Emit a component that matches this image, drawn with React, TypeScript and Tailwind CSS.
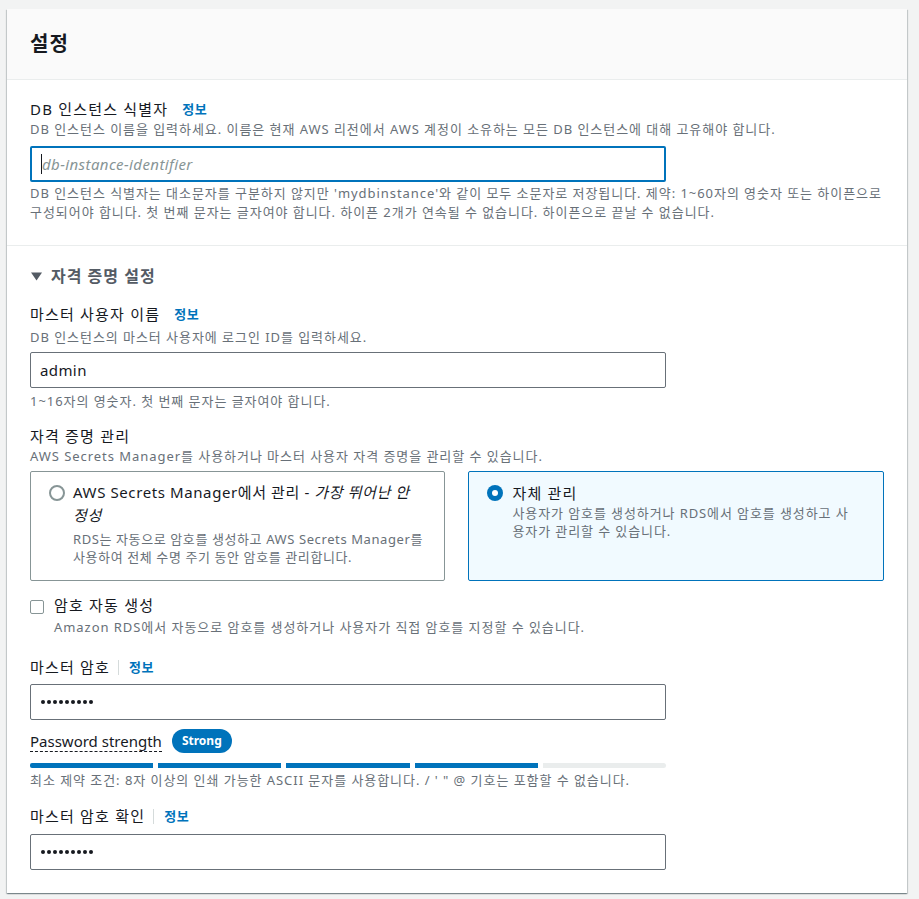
const Info = () => (
  <span className="text-[13px] font-bold tracking-[0.5px] text-[#0073bb]">정보</span>
);

const Label = ({ text, bar = false }: { text: string; bar?: boolean }) => (
  <div className="flex h-[22px] items-center text-[15px] leading-[22px] tracking-[1.2px] text-[#16191f]">
    <span>{text}</span>
    {bar ? (
      <span className="ml-[8px] mr-[10px] h-[15px] w-px bg-[#d5dbdb]" />
    ) : (
      <span className="w-[14px]" />
    )}
    <Info />
  </div>
);

const Hint = ({ children, className = "" }: { children: React.ReactNode; className?: string }) => (
  <p className={`text-[13px] leading-[19px] tracking-[0.95px] text-[#687078] ${className}`}>{children}</p>
);

const Dots = () => (
  <span className="flex gap-[2px]">
    {[0, 1, 2, 3, 4, 5, 6, 7, 8].map((i) => (
      <span key={i} className="h-[4px] w-[4px] rounded-full bg-[#16191f]" />
    ))}
  </span>
);

const PasswordBox = () => (
  <div className="flex h-[36px] w-[636px] items-center rounded-[2px] border border-[#687078] bg-white px-[10px]">
    <Dots />
  </div>
);

export default function App() {
  return (
    <div
      className="min-h-screen bg-[#f2f3f3] pl-[7px] pr-[12px] pt-[9px]"
      style={{ fontFamily: '"Noto Sans", "Noto Sans CJK KR", sans-serif' }}
    >
      <div className="w-[900px] bg-white shadow-[0_1px_1px_0_rgba(0,28,36,0.3),1px_1px_1px_0_rgba(0,28,36,0.15),-1px_1px_1px_0_rgba(0,28,36,0.15)]">
        {/* 헤더 */}
        <div className="flex h-[71px] items-center border-b border-[#eaeded] bg-[#fafafa] px-[23px]">
          <h2 className="text-[20px] font-bold leading-[28px] tracking-[1px] text-[#16191f]">설정</h2>
        </div>

        {/* DB 인스턴스 식별자 */}
        <div className="border-b border-[#eaeded] px-[23px] pb-[23px] pt-[18px]">
          <Label text="DB 인스턴스 식별자" />
          <Hint className="leading-[18px]">
            DB 인스턴스 이름을 입력하세요. 이름은 현재 AWS 리전에서 AWS 계정이 소유하는 모든 DB 인스턴스에 대해 고유해야 합니다.
          </Hint>
          <div className="mt-[7px] flex h-[36px] w-[636px] items-center rounded-[2px] border-2 border-[#0073bb] bg-white px-[9px] text-[15px] tracking-[0.4px]">
            <span className="h-[20px] w-px bg-[#16191f]" />
            <span className="italic text-[#879596]">db-instance-identifier</span>
          </div>
          <Hint className="mt-[2px] whitespace-nowrap">
            DB 인스턴스 식별자는 대소문자를 구분하지 않지만 'mydbinstance'와 같이 모두 소문자로 저장됩니다. 제약: 1~60자의 영숫자 또는 하이픈으로
            <br />
            구성되어야 합니다. 첫 번째 문자는 글자여야 합니다. 하이픈 2개가 연속될 수 없습니다. 하이픈으로 끝날 수 없습니다.
          </Hint>
        </div>

        {/* 자격 증명 설정 */}
        <div className="px-[23px] pb-[23px] pt-[19px]">
          <div className="flex h-[22px] items-center gap-[9px] text-[16px] font-bold leading-[22px] tracking-[1px] text-[#545b64]">
            <svg width="11" height="9" viewBox="0 0 11 9" className="ml-px">
              <path d="M0 0.5h11L5.5 8.5z" fill="#545b64" />
            </svg>
            자격 증명 설정
          </div>

          <div className="mt-[16px]">
            <Label text="마스터 사용자 이름" />
            <Hint className="mt-[3px] leading-[18px]">DB 인스턴스의 마스터 사용자에 로그인 ID를 입력하세요.</Hint>
            <div className="mt-[5px] flex h-[36px] w-[636px] items-center rounded-[2px] border border-[#687078] bg-white px-[9px] text-[15px] tracking-[0.4px] text-[#16191f]">
              admin
            </div>
            <Hint className="mt-[4px]">1~16자의 영숫자. 첫 번째 문자는 글자여야 합니다.</Hint>
          </div>

          <div className="mt-[14px]">
            <div className="h-[22px] text-[15px] leading-[22px] tracking-[1.2px] text-[#16191f]">자격 증명 관리</div>
            <Hint className="leading-[18px]">AWS Secrets Manager를 사용하거나 마스터 사용자 자격 증명을 관리할 수 있습니다.</Hint>
            <div className="mt-[5px] flex gap-[23px]">
              <div className="flex h-[110px] w-[415px] gap-[8px] rounded-[2px] border border-[#879596] bg-white pl-[18px] pt-[9px]">
                <span className="mt-[4px] h-[16px] w-[16px] shrink-0 rounded-full border-2 border-[#879596] bg-white" />
                <div className="whitespace-nowrap">
                  <div className="text-[15px] leading-[23px] tracking-[0.6px] text-[#16191f]">
                    AWS Secrets Manager에서 관리 - <i>가장 뛰어난 안</i>
                    <br />
                    <i>정성</i>
                  </div>
                  <p className="mt-[3px] text-[13px] leading-[18px] tracking-[0.6px] text-[#687078]">
                    RDS는 자동으로 암호를 생성하고 AWS Secrets Manager를
                    <br />
                    사용하여 전체 수명 주기 동안 암호를 관리합니다.
                  </p>
                </div>
              </div>
              <div className="flex h-[110px] w-[417px] gap-[10px] rounded-[2px] border border-[#0073bb] bg-[#f1faff] pl-[18px] pt-[10px]">
                <span className="mt-[3px] flex h-[16px] w-[16px] shrink-0 items-center justify-center rounded-full bg-[#0073bb]">
                  <span className="h-[6px] w-[6px] rounded-full bg-white" />
                </span>
                <div className="whitespace-nowrap">
                  <div className="text-[15px] leading-[22px] tracking-[1.2px] text-[#16191f]">자체 관리</div>
                  <p className="text-[13px] leading-[18px] tracking-[0.9px] text-[#687078]">
                    사용자가 암호를 생성하거나 RDS에서 암호를 생성하고 사
                    <br />
                    용자가 관리할 수 있습니다.
                  </p>
                </div>
              </div>
            </div>
          </div>

          <div className="mt-[13px] flex gap-[10px]">
            <span className="mt-[6px] h-[14px] w-[14px] shrink-0 rounded-[2px] border border-[#879596] bg-white" />
            <div>
              <div className="text-[15px] leading-[22px] tracking-[1.2px] text-[#16191f]">암호 자동 생성</div>
              <Hint className="mt-[2px] leading-[18px]">
                Amazon RDS에서 자동으로 암호를 생성하거나 사용자가 직접 암호를 지정할 수 있습니다.
              </Hint>
            </div>
          </div>

          <div className="mt-[19px]">
            <Label text="마스터 암호" bar />
            <div className="mt-[6px]">
              <PasswordBox />
            </div>
            <div className="mt-[9px] flex h-[24px] items-center gap-[10px]">
              <span className="border-b border-dashed border-[#16191f] text-[15px] leading-[20px] text-[#16191f]">
                Password strength
              </span>
              <span className="rounded-full bg-[#0073bb] px-[10px] text-[12px] font-bold leading-[24px] text-white">
                Strong
              </span>
            </div>
            <div className="mt-[10px] flex w-[636px] gap-[5px]">
              <span className="h-[5px] flex-1 rounded-l-[2px] bg-[#0073bb]" />
              <span className="h-[5px] flex-1 bg-[#0073bb]" />
              <span className="h-[5px] flex-1 bg-[#0073bb]" />
              <span className="h-[5px] flex-1 bg-[#0073bb]" />
              <span className="h-[5px] flex-1 rounded-r-[3px] bg-[#eaeded]" />
            </div>
            <Hint className="mt-[3px]">
              최소 제약 조건: 8자 이상의 인쇄 가능한 ASCII 문자를 사용합니다. / ' " @ 기호는 포함할 수 없습니다.
            </Hint>
          </div>

          <div className="mt-[15px]">
            <Label text="마스터 암호 확인" bar />
            <div className="mt-[7px]">
              <PasswordBox />
            </div>
          </div>
        </div>
      </div>
    </div>
  );
}
